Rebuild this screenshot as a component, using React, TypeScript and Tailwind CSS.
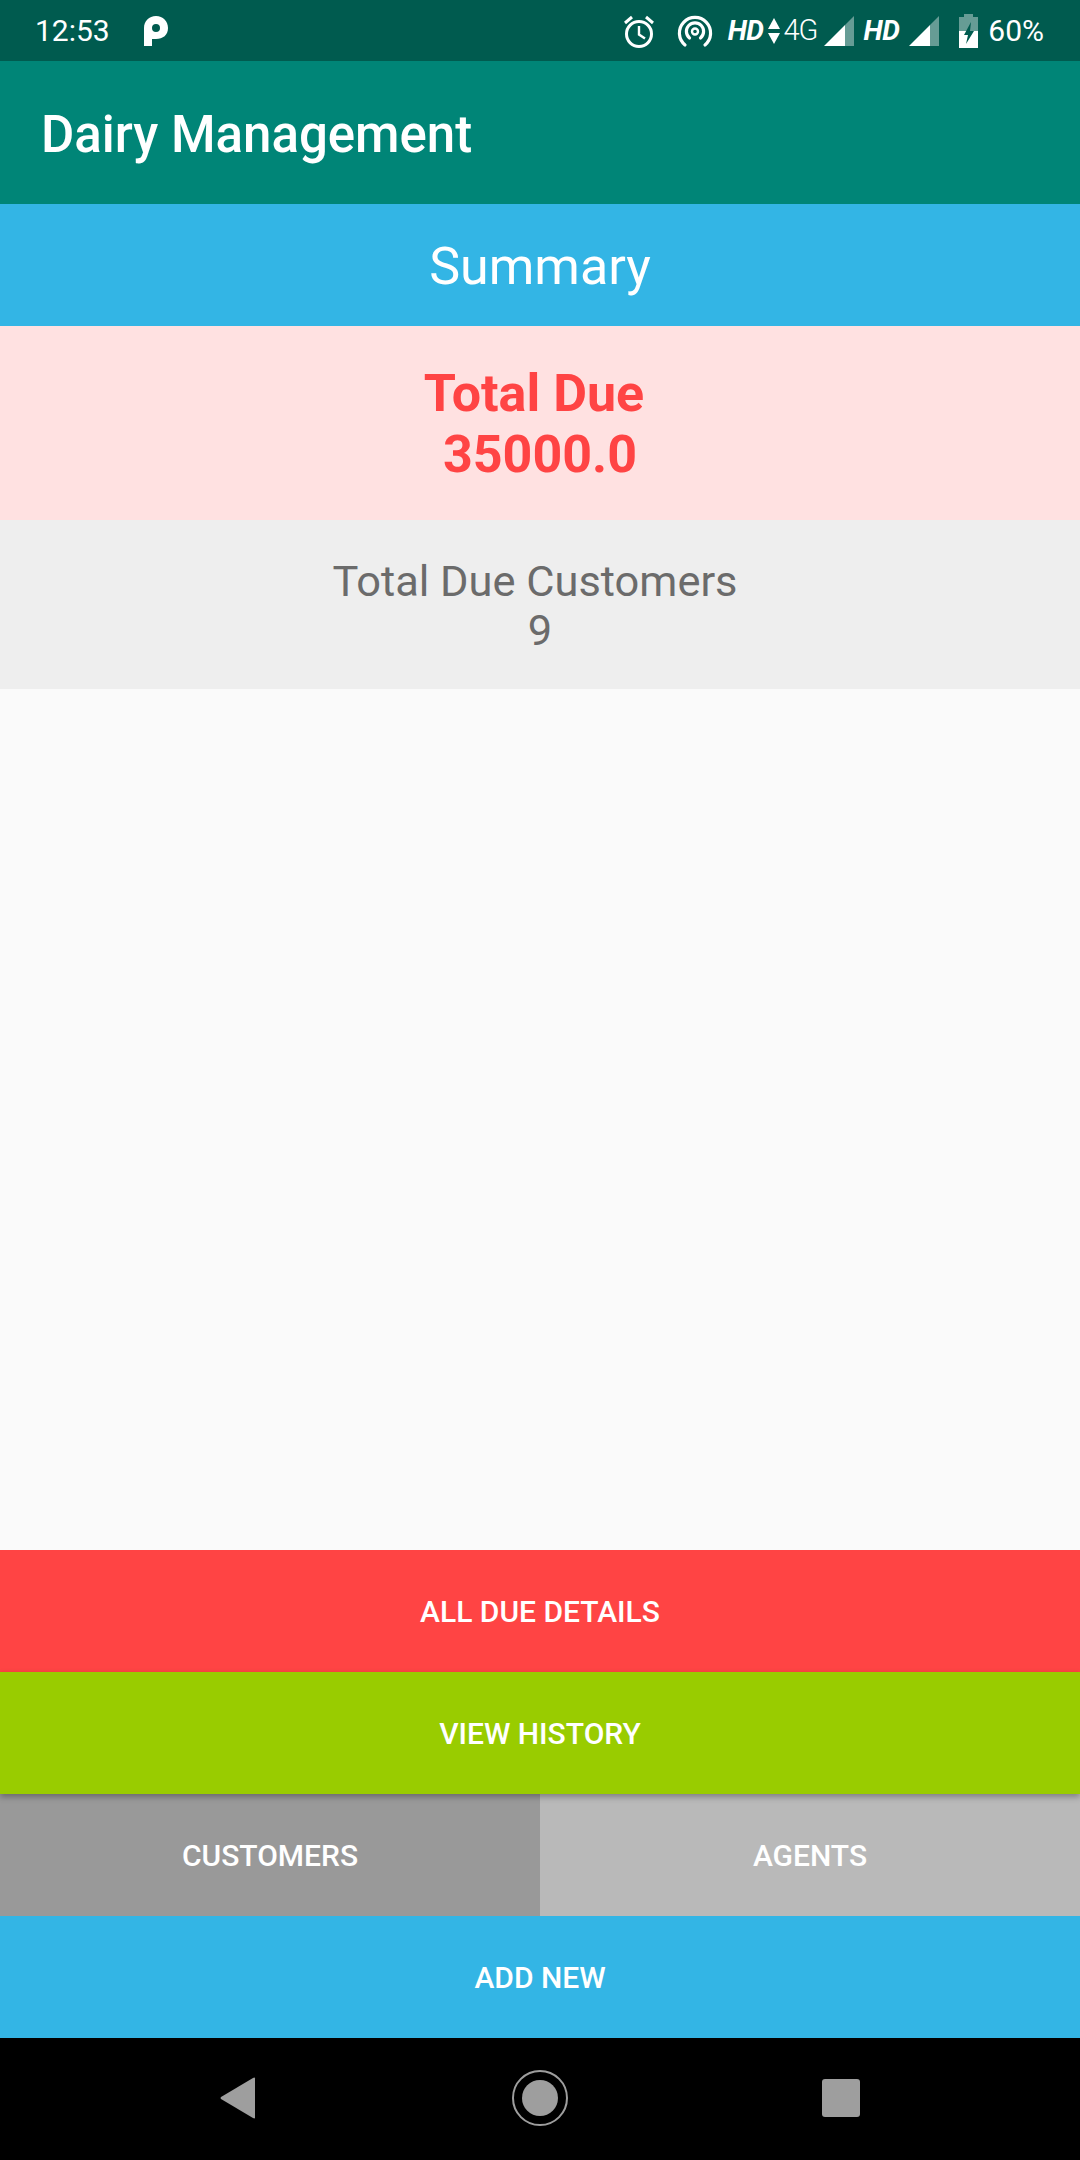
import React from "react";

const ROBOTO = "font-['Roboto',sans-serif]";

const Signal = () => (
  <svg width="30" height="30" viewBox="0 0 30 30" className="shrink-0">
    <path d="M30 0V30H21V9Z" fill="#ffffff" fillOpacity="0.4" />
    <path d="M0 30L21 9V30Z" fill="#ffffff" />
  </svg>
);

const StatusIcons = () => (
  <div className="flex items-center">
    <svg width="32" height="34" viewBox="0 0 32 34" fill="none" stroke="#fff" strokeWidth="3" className="mr-[22px] shrink-0">
      <circle cx="16" cy="20" r="12.5" />
      <path d="M16 12V20.5L22 24.5" strokeWidth="2.4" />
      <path d="M2 9L9 3M30 9L23 3" />
    </svg>
    <svg width="36" height="34" viewBox="0 0 36 34" fill="none" stroke="#fff" strokeWidth="3.2" strokeLinecap="round" className="mr-[15px] shrink-0">
      <path d="M8 31A15.6 15.6 0 1 1 28 31" />
      <path d="M12.5 24A8.6 8.6 0 1 1 23.5 24" />
      <circle cx="18" cy="17.5" r="3" strokeWidth="2.4" />
    </svg>
    <span className="mr-[4px] text-[28px] leading-none font-bold italic tracking-[-0.5px] text-white">HD</span>
    <svg width="12" height="26" viewBox="0 0 12 26" fill="#fff" className="mr-[4px] shrink-0">
      <path d="M6 0L12 11H0Z" />
      <path d="M0 15H12L6 26Z" />
    </svg>
    <span className="mr-[7px] text-[29px] leading-none font-light tracking-[-1px] text-white">4G</span>
    <Signal />
    <span className="mr-[10px] ml-[9px] text-[28px] leading-none font-bold italic tracking-[-0.5px] text-white">HD</span>
    <Signal />
    <svg width="19" height="34" viewBox="0 0 19 34" className="mr-[10px] ml-[20px] shrink-0">
      <path d="M5 0H14V3H19V17H0V3H5Z" fill="#fff" fillOpacity="0.4" />
      <path d="M0 17H19V34H0Z" fill="#fff" />
      <path d="M12 8L5 21H9L7 30L15 17H11Z" fill="#005b4f" />
    </svg>
    <span className="text-[30px] leading-none text-white">60%</span>
  </div>
);

const ActionButton = ({ label, className }: { label: string; className: string }) => (
  <button className={`flex h-[122px] w-full items-center justify-center text-[30px] font-medium text-white ${className}`}>
    {label}
  </button>
);

const NavBar = () => (
  <div className="flex h-[122px] items-center bg-black pb-[2px] pl-[220px] pr-[220px]">
    <svg width="36" height="42" viewBox="0 0 36 42" className="shrink-0">
      <path d="M35 1.5V40.5Q35 42 33 41L1 22Q0 21 1 20L33 1Q35 0 35 1.5Z" fill="#9e9e9e" />
    </svg>
    <svg width="56" height="56" viewBox="0 0 56 56" className="ml-[256px] shrink-0">
      <circle cx="28" cy="28" r="27" fill="none" stroke="#9e9e9e" strokeWidth="2" />
      <circle cx="28" cy="28" r="18" fill="#9e9e9e" />
    </svg>
    <svg width="38" height="38" viewBox="0 0 38 38" className="ml-auto shrink-0">
      <rect width="38" height="38" rx="3" fill="#9e9e9e" />
    </svg>
  </div>
);

export default function App() {
  return (
    <div className={`flex h-[2160px] w-[1080px] flex-col bg-[#fafafa] ${ROBOTO}`}>
      <div className="flex h-[61px] items-center justify-between bg-[#005b4f] pl-[35px] pr-[36px]">
        <div className="flex items-center">
          <span className="text-[30px] leading-none text-white">12:53</span>
          <svg width="24" height="30" viewBox="0 0 24 30" className="ml-[34px] shrink-0">
            <path fillRule="evenodd" d="M0 12C0 5 5 0 12 0S24 5 24 12 19 23 12 23H8V30H0ZM8 12A4 4 0 1 0 16 12 4 4 0 1 0 8 12Z" fill="#fff" />
          </svg>
        </div>
        <StatusIcons />
      </div>

      <div className="flex h-[143px] items-center bg-[#008577] pl-[41px] pt-[3px]">
        <h1 className="text-[51px] leading-none font-medium text-white">Dairy Management</h1>
      </div>

      <div className="flex h-[122px] items-center justify-center bg-[#33b5e5] pt-[3px] text-[52px] text-white">Summary</div>

      <div className="flex h-[194px] flex-col items-center justify-center bg-[#ffe1e1] pt-[2px] text-center text-[52px] leading-[61px] font-bold text-[#ff4444]">
        <p className="pr-[12px]">Total Due</p>
        <p>35000.0</p>
      </div>

      <div className="flex h-[169px] flex-col items-center justify-center bg-[#eeeeee] pt-[3px] text-center text-[43.4px] leading-[49px] text-[#6b6b6b]">
        <p className="pr-[10px]">Total Due Customers</p>
        <p>9</p>
      </div>

      <div className="flex-1" />

      <ActionButton label="ALL DUE DETAILS" className="bg-[#ff4444]" />
      <ActionButton label="VIEW HISTORY" className="relative z-10 bg-[#99cc00] shadow-[0_3px_6px_rgba(0,0,0,0.3)]" />
      <div className="flex">
        <ActionButton label="CUSTOMERS" className="bg-[#999999]" />
        <ActionButton label="AGENTS" className="bg-[#b9b9b9]" />
      </div>
      <ActionButton label="ADD NEW" className="bg-[#33b5e5]" />
      <NavBar />
    </div>
  );
}
